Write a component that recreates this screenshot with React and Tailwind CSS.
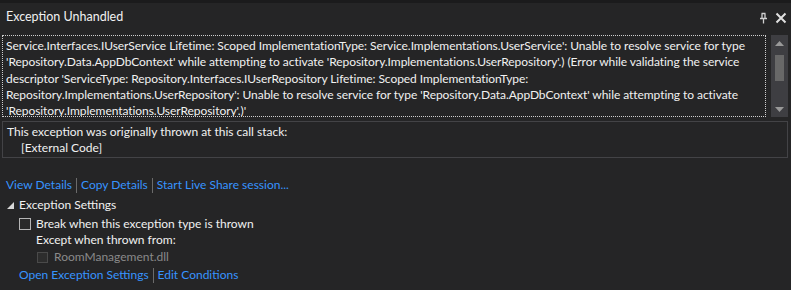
import React from 'react'

const lines = [
    "Service.Interfaces.IUserService Lifetime: Scoped ImplementationType: Service.Implementations.UserService': Unable to resolve service for type",
    "'Repository.Data.AppDbContext' while attempting to activate 'Repository.Implementations.UserRepository'.) (Error while validating the service",
    "descriptor 'ServiceType: Repository.Interfaces.IUserRepository Lifetime: Scoped ImplementationType:",
    "Repository.Implementations.UserRepository': Unable to resolve service for type 'Repository.Data.AppDbContext' while attempting to activate",
    "'Repository.Implementations.UserRepository'.)'",
]

const Sep = () => <span className="mx-[4px] inline-block h-[15px] w-px bg-[#6b6b6b] align-middle" />

const App = () => {
    return (
        <div
            className="flex h-[290px] w-[791px] flex-col overflow-hidden bg-[#252526] text-[12px] text-[#f1f1f1]"
            style={{ fontFamily: 'Lato, "Noto Sans", sans-serif' }}
        >
            {/* top strip */}
            <div className="h-[3px] bg-[#1b1b1c]" />

            {/* title bar */}
            <div className="flex h-[29px] items-center pl-[6px] pr-[4px] text-[12.5px]">
                <span>Exception Unhandled</span>
                <div className="ml-auto flex items-center gap-[7px]">
                    <svg width="9" height="12" viewBox="0 0 9 12">
                        <path d="M2.5 1.5h4M3 1.5v5M6 1.5v5M1 6.5h7M4.5 6.5v5" stroke="#d0d0d0" strokeWidth="1.3" fill="none" />
                    </svg>
                    <svg width="12" height="12" viewBox="0 0 12 12">
                        <path d="M1.5 1.5l9 9M10.5 1.5l-9 9" stroke="#e0e0e0" strokeWidth="2" />
                    </svg>
                </div>
            </div>

            {/* message box */}
            <div className="mt-[3px] flex h-[82px] pl-[2px] pr-[3px]">
                <div className="flex-1 overflow-hidden border border-dotted border-[#cfcfcf] pl-[3px]">
                    <div className="mt-[2px] leading-[16.3px] tracking-[-0.06px] whitespace-nowrap">
                        {lines.map((l, i) => (
                            <div key={i}>{l}</div>
                        ))}
                    </div>
                </div>
                <div className="ml-[5px] flex w-[17px] flex-col items-center bg-[#3e3e42]">
                    <div className="flex h-[16px] items-center justify-center">
                        <svg width="9" height="5" viewBox="0 0 9 5"><path d="M0 5L4.5 0L9 5z" fill="#999" /></svg>
                    </div>
                    <div className="mt-[4px] h-[26px] w-[9px] bg-[#686868]" />
                    <div className="mt-auto flex h-[16px] items-center justify-center">
                        <svg width="9" height="5" viewBox="0 0 9 5"><path d="M0 0L4.5 5L9 0z" fill="#999" /></svg>
                    </div>
                </div>
            </div>

            {/* call stack box */}
            <div className="mx-[2px] mr-[3px] mt-[4px] h-[37px] border border-[#434346] pl-[4px] pt-[2px] leading-[16px]">
                <div>This exception was originally thrown at this call stack:</div>
                <div className="pl-[14px]">[External Code]</div>
            </div>

            {/* links */}
            <div className="mt-[17px] flex h-[20px] items-center pl-[6px] text-[#3794ff]">
                <span>View Details</span>
                <Sep />
                <span>Copy Details</span>
                <Sep />
                <span>Start Live Share session...</span>
            </div>

            {/* exception settings */}
            <div className="flex h-[20px] items-center pl-[7px]">
                <svg width="7" height="7" viewBox="0 0 7 7" className="mr-[5px]">
                    <path d="M7 0L7 7L0 7z" fill="#d8d8d8" />
                </svg>
                <span>Exception Settings</span>
            </div>
            <div className="flex h-[18px] items-center pl-[19px]">
                <span className="mr-[5px] inline-block h-[12px] w-[12px] border border-[#b5b5b5] bg-[#2a2a2a]" />
                <span>Break when this exception type is thrown</span>
            </div>
            <div className="flex h-[14px] items-center pl-[36px]">Except when thrown from:</div>
            <div className="flex h-[20px] items-center pl-[37px] text-[#8a8a8a]">
                <span className="mr-[6px] inline-block h-[11px] w-[11px] border border-[#4a4a4a] bg-[#2d2d2d]" />
                <span>RoomManagement.dll</span>
            </div>
            <div className="flex h-[16px] items-center pl-[19px] text-[#3794ff]">
                <span>Open Exception Settings</span>
                <Sep />
                <span>Edit Conditions</span>
            </div>
        </div>
    )
}

export default App
